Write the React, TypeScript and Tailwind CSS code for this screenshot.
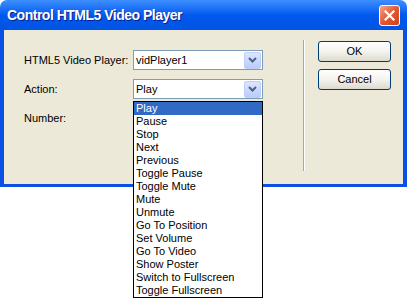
import React from 'react';

const actions = [
  'Play',
  'Pause',
  'Stop',
  'Next',
  'Previous',
  'Toggle Pause',
  'Toggle Mute',
  'Mute',
  'Unmute',
  'Go To Position',
  'Set Volume',
  'Go To Video',
  'Show Poster',
  'Switch to Fullscreen',
  'Toggle Fullscreen',
];

const DropArrow: React.FC = () => (
  <div className="w-[17px] h-[17px] rounded-[2px] border border-[#BCCFF7] bg-gradient-to-b from-[#DCE6FE] to-[#B9CCF9] flex items-center justify-center">
    <svg width="9" height="6" viewBox="0 0 9 6">
      <path d="M1 1 L4.5 4.5 L8 1" fill="none" stroke="#4D6185" strokeWidth="2" />
    </svg>
  </div>
);

const Combo: React.FC<{ value: string }> = ({ value }) => (
  <div className="w-[130px] h-[20px] border border-[#7F9DB9] bg-white flex items-center justify-between pl-[2px] pr-[1px]">
    <span className="text-[11px] text-black leading-none">{value}</span>
    <DropArrow />
  </div>
);

const XpButton: React.FC<{ label: string }> = ({ label }) => (
  <button className="w-[73px] h-[21px] rounded-[3px] border border-[#003C74] bg-gradient-to-b from-white via-[#F4F3EE] to-[#DCDAD0] text-[11px] text-black leading-none">
    {label}
  </button>
);

const App: React.FC = () => {
  return (
    <div className="w-[407px] h-[301px] bg-white relative overflow-hidden font-['Liberation_Sans',Arial,sans-serif]">
      {/* Title bar */}
      <div className="h-[30px] rounded-t-[7px] bg-gradient-to-b from-[#3D8FFF] via-[#0058EE] to-[#0054E3] flex items-center justify-between pl-[7px] pr-[7px]">
        <span className="text-white font-bold text-[14px] tracking-[-0.5px] [text-shadow:1px_1px_0_#0A1E8C]">
          Control HTML5 Video Player
        </span>
        <div className="w-[21px] h-[21px] rounded-[3px] border border-white bg-gradient-to-br from-[#F2A48C] via-[#E2582F] to-[#CC4418] flex items-center justify-center">
          <svg width="11" height="11" viewBox="0 0 11 11">
            <path d="M1.5 1.5 L9.5 9.5 M9.5 1.5 L1.5 9.5" stroke="white" strokeWidth="2.2" strokeLinecap="square" />
          </svg>
        </div>
      </div>

      {/* Body */}
      <div className="h-[157px] border-x-[4px] border-b-[3px] border-[#0B4FE6] bg-[#ECE9D8] flex">
        <div className="pl-[20px] pt-[20px] flex flex-col gap-[9px]">
          <div className="flex items-center h-[20px]">
            <span className="w-[109px] text-[11px] text-black">HTML5 Video Player:</span>
            <Combo value="vidPlayer1" />
          </div>
          <div className="flex items-center h-[20px]">
            <span className="w-[109px] text-[11px] text-black">Action:</span>
            <Combo value="Play" />
          </div>
          <div className="flex items-center h-[20px]">
            <span className="w-[109px] text-[11px] text-black">Number:</span>
          </div>
        </div>

        <div className="ml-[40px] mt-[10px] h-[131px] w-[2px] flex">
          <div className="w-px bg-[#ACA899]" />
          <div className="w-px bg-white" />
        </div>

        <div className="ml-[13px] pt-[11px] flex flex-col gap-[7px]">
          <XpButton label="OK" />
          <XpButton label="Cancel" />
        </div>
      </div>

      {/* Open dropdown list */}
      <div className="absolute left-[133px] top-[101px] w-[130px] border border-black bg-white">
        {actions.map((a, i) => (
          <div
            key={a}
            className={`h-[13px] pl-[2px] text-[11px] leading-[13px] whitespace-nowrap ${
              i === 0 ? 'bg-[#316AC5] text-white' : 'text-black'
            }`}
          >
            {a}
          </div>
        ))}
      </div>
    </div>
  );
};

export default App;
